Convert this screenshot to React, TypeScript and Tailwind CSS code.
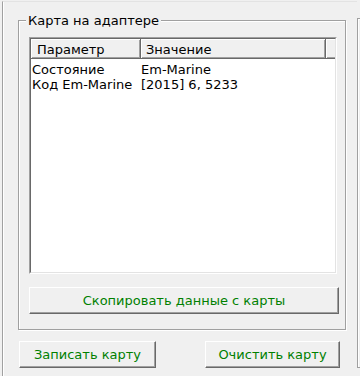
import React from "react";

const font = { fontFamily: '"DejaVu Sans", Verdana, sans-serif' };

function Btn({ children, className }: { children: React.ReactNode; className: string }) {
  return (
    <div
      className={
        "flex items-center justify-center border border-t-white border-l-white border-r-[#696969] border-b-[#696969] bg-[#f0f0f0] shadow-[inset_-1px_-1px_0_#a0a0a0] text-[13px] leading-[15px] text-[#008000] " +
        className
      }
    >
      {children}
    </div>
  );
}

export default function App() {
  const rows = [
    ["Состояние", "Em-Marine"],
    ["Код Em-Marine", "[2015] 6, 5233"],
  ];
  return (
    <div className="w-[360px] h-[376px] bg-[#f0f0f0] overflow-hidden flex pl-[2px]" style={font}>
      {/* tab page */}
      <div className="w-[355px] h-[376px] mt-[1px] border-l border-t border-l-[#a0a0a0] border-t-[#e3e3e3] shadow-[inset_1px_0_0_#fff] flex flex-col">
        {/* group box */}
        <div className="relative ml-[15px] mt-[18px] w-[328px] h-[310px] border border-[#a0a0a0] shadow-[inset_1px_1px_0_#fff,1px_1px_0_#fff] pl-[10px] pt-[16px]">
          <span className="absolute left-[7px] top-[-8px] px-[2px] bg-[#f0f0f0] text-[13px] leading-[15px] text-black">
            Карта на адаптере
          </span>
          {/* list view */}
          <div className="w-[308px] h-[237px] border border-t-[#a0a0a0] border-l-[#a0a0a0] border-r-white border-b-white">
            <div className="w-full h-full border border-t-[#696969] border-l-[#696969] border-r-[#e3e3e3] border-b-[#e3e3e3] bg-white flex flex-col">
              <div className="flex h-[20px] bg-[#f0f0f0] text-[13px] leading-[15px] text-black">
                <div className="w-[110px] border-r border-b border-[#696969] shadow-[inset_1px_1px_0_#fff,inset_-1px_-1px_0_#a0a0a0] pl-[6px] pt-[3px]">
                  Параметр
                </div>
                <div className="w-[185px] border-r border-b border-[#696969] shadow-[inset_1px_1px_0_#fff,inset_-1px_-1px_0_#a0a0a0] pl-[5px] pt-[3px]">
                  Значение
                </div>
                <div className="flex-1 border-b border-[#696969] shadow-[inset_1px_1px_0_#fff,inset_0_-1px_0_#a0a0a0]" />
              </div>
              <div className="pt-[3px] text-[13px] leading-[15px] text-black">
                {rows.map(([a, b]) => (
                  <div key={a} className="flex">
                    <div className="w-[110px] pl-[1px] whitespace-nowrap">{a}</div>
                    <div className="pl-[0px] whitespace-nowrap">{b}</div>
                  </div>
                ))}
              </div>
            </div>
          </div>
          <Btn className="mt-[13px] w-[310px] h-[27px]">Скопировать данные с карты</Btn>
        </div>
        {/* bottom buttons */}
        <div className="flex ml-[16px] mt-[11px]">
          <Btn className="w-[137px] h-[27px]">Записать карту</Btn>
          <Btn className="ml-[49px] w-[135px] h-[27px]">Очистить карту</Btn>
        </div>
      </div>
      {/* right neighbour panel */}
      <div className="w-[3px] h-[350px] mt-[18px] border-l border-t border-b border-[#a0a0a0] shadow-[inset_1px_1px_0_#fff]" />
    </div>
  );
}
